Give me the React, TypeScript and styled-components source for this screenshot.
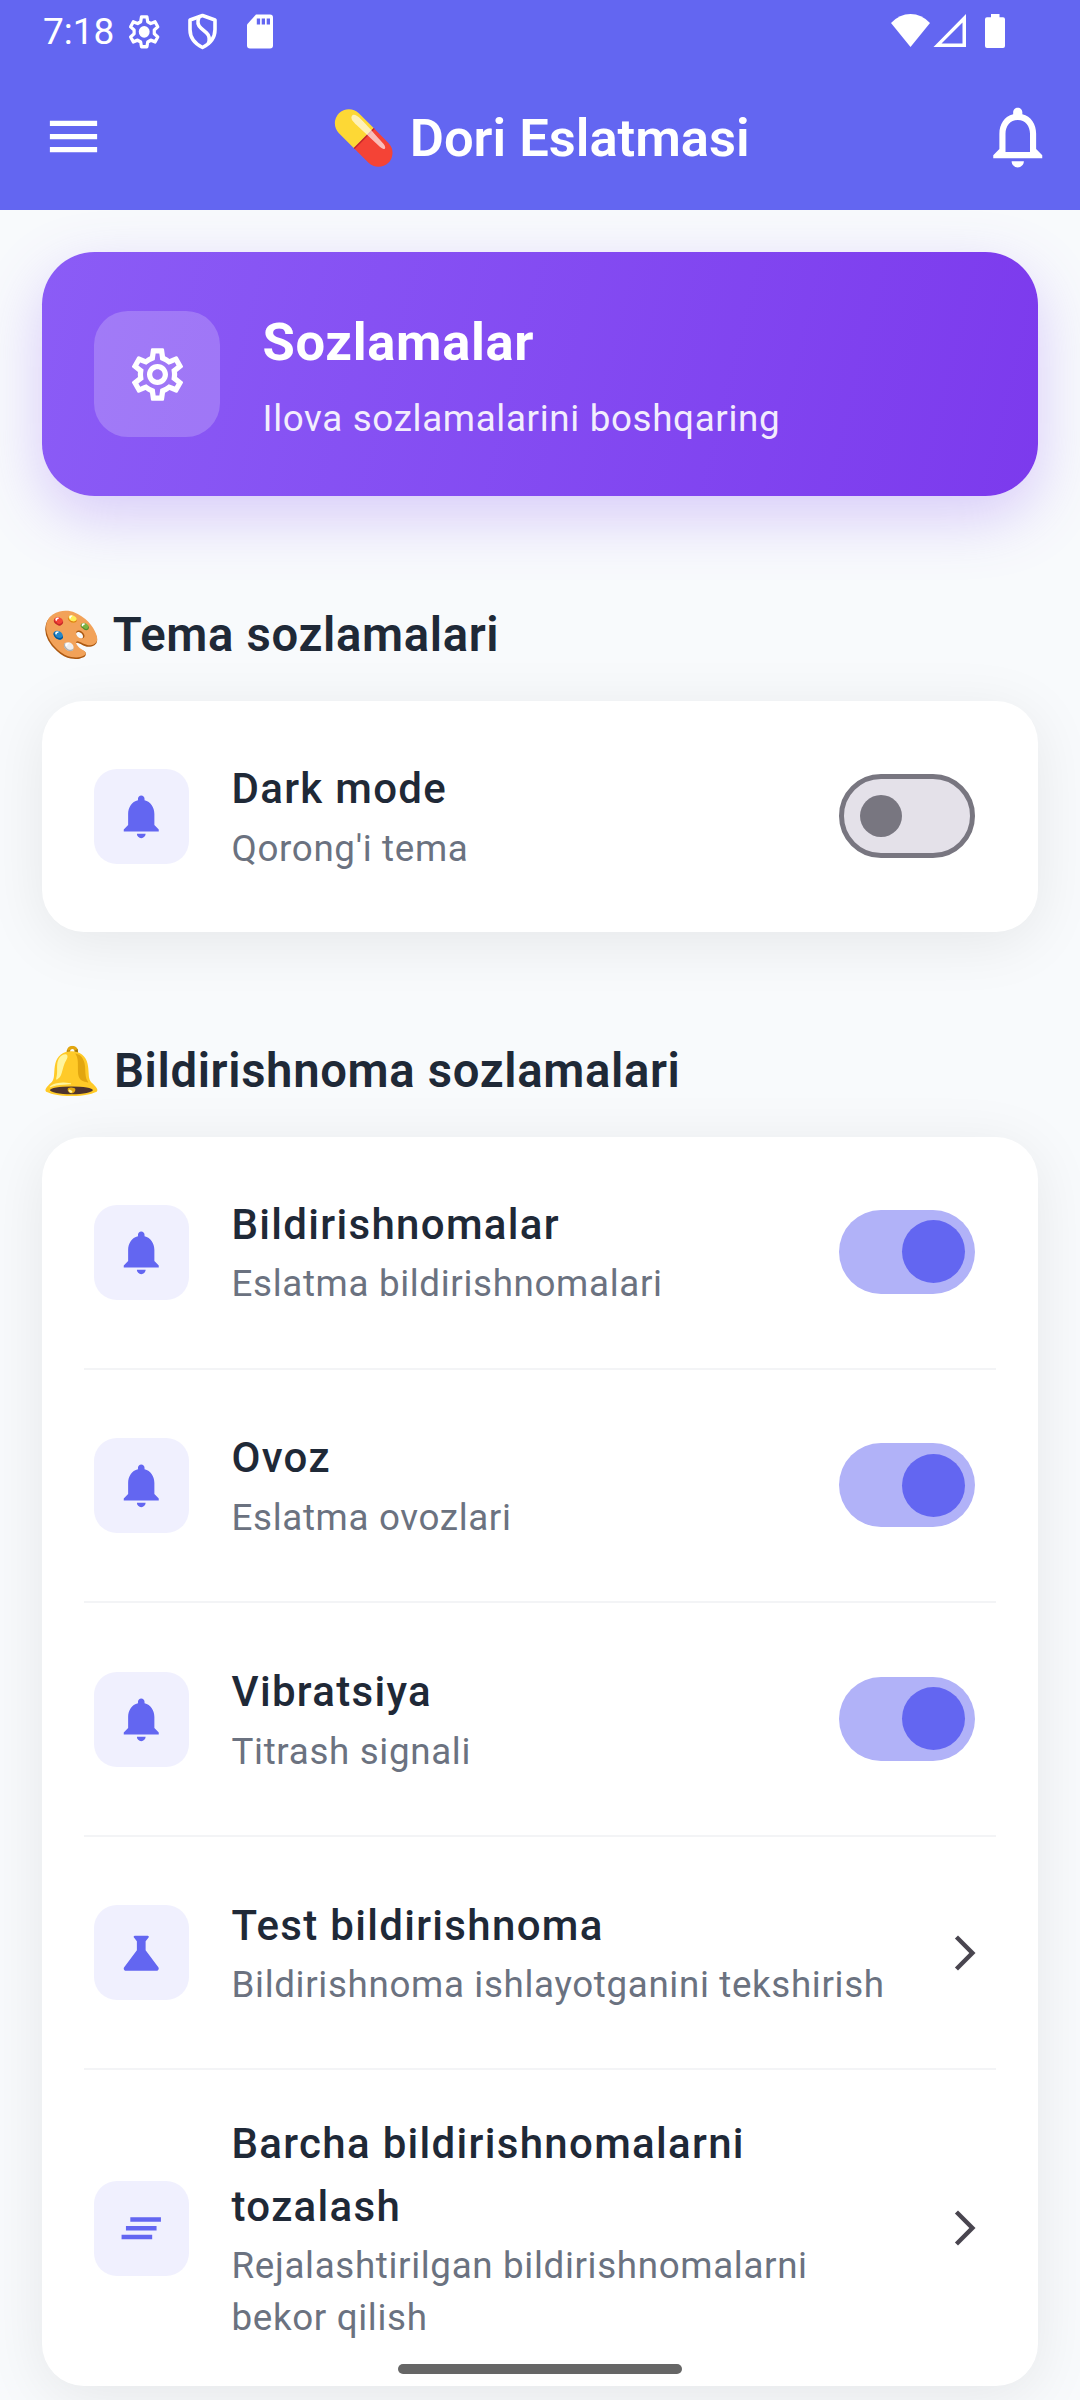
import React from "react";
import styled, { createGlobalStyle } from "styled-components";
import {
  MdArrowForwardIos,
  MdClearAll,
  MdMenu,
  MdNotifications,
  MdNotificationsNone,
  MdOutlineSettings,
  MdScience,
} from "react-icons/md";

const GlobalStyle = createGlobalStyle`
  * { box-sizing: border-box; }
  body {
    margin: 0;
    background: #f8fafc;
    font-family: Roboto, "Noto Color Emoji", sans-serif;
  }
  svg { display: block; flex: none; }
`;

const Screen = styled.div`
  position: relative;
  width: 1080px;
  height: 2400px;
  overflow: hidden;
  background: #f8fafc;
`;

const TopBar = styled.header`
  height: 210px;
  background: #6366f1;
  color: #fff;
`;

const StatusBar = styled.div`
  height: 63px;
  padding: 0 74px 0 43px;
  display: flex;
  align-items: center;
  justify-content: space-between;
`;

const StatusGroup = styled.div`
  display: flex;
  align-items: center;
`;

const Clock = styled.span`
  width: 84px;
  font-size: 37px;
  line-height: 44px;
`;

const AppBar = styled.div`
  height: 147px;
  padding: 0 25.5px 0 42px;
  display: grid;
  grid-template-columns: 63px 1fr 74px;
  align-items: center;
`;

const AppTitle = styled.h1`
  margin: 0 4.5px 0 0;
  padding-top: 2px;
  display: flex;
  align-items: center;
  justify-content: center;
  font-size: 52.5px;
  font-weight: 600;
  line-height: 62px;
`;

const Content = styled.main`
  padding: 42px 42px 0;
`;

const HeroCard = styled.section`
  height: 244px;
  padding: 0 52px;
  display: flex;
  align-items: center;
  gap: 42.5px;
  border-radius: 52.5px;
  color: #fff;
  background: linear-gradient(103.77deg, #8b5cf6, #7c3aed);
  box-shadow: 0 21px 61px rgba(139, 92, 246, 0.3);
`;

const HeroIcon = styled.div`
  width: 126px;
  height: 126px;
  display: grid;
  place-items: center;
  border-radius: 34px;
  background: rgba(255, 255, 255, 0.2);
`;

const HeroText = styled.div`
  padding-top: 4px;
`;

const HeroTitle = styled.h2`
  margin: 0 0 16px;
  font-size: 52.5px;
  font-weight: 700;
  line-height: 70px;
  letter-spacing: 0.656px;
`;

const HeroSubtitle = styled.p`
  margin: 0;
  font-size: 36.75px;
  line-height: 52px;
  letter-spacing: 0.66px;
  opacity: 0.9;
`;

const SectionTitle = styled.h3`
  height: 71px;
  margin: 101.8px 0 32px;
  padding-top: 3px;
  display: flex;
  align-items: center;
  font-size: 47.25px;
  font-weight: 600;
  letter-spacing: 0.656px;
  color: #1f2937;
`;

const Card = styled.section`
  border-radius: 42px;
  background: #fff;
  box-shadow: 0 10.5px 61px rgba(0, 0, 0, 0.08);
`;

const Divider = styled.div`
  height: 2px;
  margin: 0 42px 0.6px;
  background: #f3f4f6;
`;

const Row = styled.div<{ $tall?: boolean }>`
  height: ${(p) => (p.$tall ? 315 : 231)}px;
  padding: 0 52.5px 0 52px;
  display: flex;
  align-items: center;
`;

const RowIcon = styled.div`
  width: 95px;
  height: 95px;
  flex: none;
  display: grid;
  place-items: center;
  border-radius: 23px;
  color: #6366f1;
  background: #f0f0fe;
`;

const RowText = styled.div`
  flex: 1;
  min-width: 0;
  margin-left: 42.5px;
`;

const RowTitle = styled.div`
  margin: -1px 0 2.6px;
  font-size: 42px;
  font-weight: 500;
  line-height: 63px;
  letter-spacing: 1.3125px;
  color: #1f2937;
`;

const RowSubtitle = styled.div`
  font-size: 36.75px;
  line-height: 52px;
  letter-spacing: 0.656px;
  color: #6b7280;
`;

const Track = styled.button<{ $on: boolean }>`
  width: 136px;
  height: 84px;
  margin: 0 10.5px 1px 16px;
  padding: 0 ${(p) => (p.$on ? 10.5 : 15.75)}px;
  flex: none;
  display: flex;
  align-items: center;
  justify-content: ${(p) => (p.$on ? "flex-end" : "flex-start")};
  border: ${(p) => (p.$on ? "0" : "5.25px solid #787680")};
  border-radius: 42px;
  background: ${(p) => (p.$on ? "#b1b2f8" : "#e4e1e9")};
`;

const Thumb = styled.span<{ $on: boolean }>`
  width: ${(p) => (p.$on ? 63 : 42)}px;
  height: ${(p) => (p.$on ? 63 : 42)}px;
  border-radius: 50%;
  background: ${(p) => (p.$on ? "#6366f1" : "#787680")};
`;

const Chevron = styled(MdArrowForwardIos)`
  width: 42px;
  height: 42px;
  margin-left: 42px;
  color: #49454f;
`;

const HomeIndicator = styled.div`
  position: absolute;
  left: 398px;
  bottom: 26px;
  width: 284px;
  height: 10px;
  border-radius: 5px;
  background: #666;
`;

function Toggle({ on }: { on: boolean }) {
  return (
    <Track $on={on} role="switch" aria-checked={on}>
      <Thumb $on={on} />
    </Track>
  );
}

function LeftStatusIcons() {
  return (
    <svg width="150" height="38" viewBox="0 0 150 38" fill="none">
      <g transform="translate(-2 0.500) scale(1.600 1.700)">
        <path
          d="M10.3 2h3.4l.5 2.8 1.9 1.1 2.7-1 1.7 2.9-2.2 1.9v2.2l2.2 1.9-1.7 2.9-2.7-1-1.9 1.1-.5 2.8h-3.4l-.5-2.8-1.9-1.1-2.7 1-1.7-2.9 2.2-1.9V9.7L3.500 7.800l1.700-2.900 2.700 1 1.900-1.100z"
          stroke="#fff"
          strokeWidth="2"
          strokeLinejoin="round"
        />
        <circle cx="12" cy="10.800" r="3.400" fill="#fff" />
      </g>
      <path
        d="M75.500 2.500 88 7v9.500c0 8-4.500 14-12.500 18C67.500 30.500 63 24.500 63 16.500V7z"
        stroke="#fff"
        strokeWidth="3.600"
        strokeLinejoin="round"
      />
      <path
        d="M72 4c-2 5-1.200 8.500 2 11.200l5.500 4.600c3.200 2.900 3.600 6.500 1.700 11.200"
        stroke="#fff"
        strokeWidth="3.600"
      />
      <path
        d="M129 1.500h14q3 0 3 3v28q0 3-3 3h-20q-3 0-3-3V11.500z"
        fill="#fff"
      />
      <path d="M129.800 5.500h3.300v6h-3.300zM134.700 5.500h3.300v6h-3.300zM139.700 5.500h3.300v6h-3.300z" fill="#6366f1" />
    </svg>
  );
}

function RightStatusIcons() {
  return (
    <svg width="115" height="38" viewBox="0 0 115 38" fill="#fff">
      <path d="M0 10Q8.500 1 19.500 1T39 10L19.500 34z" />
      <path d="M75 1v33H42.500zM71.500 9.500 50.500 30.500h21z" fillRule="evenodd" />
      <path d="M100 1h8.500v3.300h3.500q2 0 2 2V33q0 2-2 2H96q-2 0-2-2V6.300q0-2 2-2h4z" />
    </svg>
  );
}

type Setting = {
  title: string;
  subtitle: string;
  icon: React.ReactNode;
  on?: boolean;
  tall?: boolean;
};

const bell = <MdNotifications size={52.5} />;

const themeSettings: Setting[] = [
  { title: "Dark mode", subtitle: "Qorong'i tema", icon: bell, on: false },
];

const notificationSettings: Setting[] = [
  { title: "Bildirishnomalar", subtitle: "Eslatma bildirishnomalari", icon: bell, on: true },
  { title: "Ovoz", subtitle: "Eslatma ovozlari", icon: bell, on: true },
  { title: "Vibratsiya", subtitle: "Titrash signali", icon: bell, on: true },
  {
    title: "Test bildirishnoma",
    subtitle: "Bildirishnoma ishlayotganini tekshirish",
    icon: <MdScience size={52.5} />,
  },
  {
    title: "Barcha bildirishnomalarni tozalash",
    subtitle: "Rejalashtirilgan bildirishnomalarni bekor qilish",
    icon: <MdClearAll size={52.5} />,
    tall: true,
  },
];

function SettingsCard({ items }: { items: Setting[] }) {
  return (
    <Card>
      {items.map((item, i) => (
        <React.Fragment key={item.title}>
          {i > 0 && <Divider />}
          <Row $tall={item.tall}>
            <RowIcon>{item.icon}</RowIcon>
            <RowText>
              <RowTitle>{item.title}</RowTitle>
              <RowSubtitle>{item.subtitle}</RowSubtitle>
            </RowText>
            {item.on === undefined ? <Chevron /> : <Toggle on={item.on} />}
          </Row>
        </React.Fragment>
      ))}
    </Card>
  );
}

export default function App() {
  return (
    <Screen>
      <GlobalStyle />
      <TopBar>
        <StatusBar>
          <StatusGroup>
            <Clock>7:18</Clock>
            <LeftStatusIcons />
          </StatusGroup>
          <RightStatusIcons />
        </StatusBar>
        <AppBar>
          <MdMenu size={63} />
          <AppTitle>💊 Dori Eslatmasi</AppTitle>
          <MdNotificationsNone size={73.5} />
        </AppBar>
      </TopBar>
      <Content>
        <HeroCard>
          <HeroIcon>
            <MdOutlineSettings size={63} />
          </HeroIcon>
          <HeroText>
            <HeroTitle>Sozlamalar</HeroTitle>
            <HeroSubtitle>Ilova sozlamalarini boshqaring</HeroSubtitle>
          </HeroText>
        </HeroCard>
        <SectionTitle>🎨 Tema sozlamalari</SectionTitle>
        <SettingsCard items={themeSettings} />
        <SectionTitle>🔔 Bildirishnoma sozlamalari</SectionTitle>
        <SettingsCard items={notificationSettings} />
      </Content>
      <HomeIndicator />
    </Screen>
  );
}
